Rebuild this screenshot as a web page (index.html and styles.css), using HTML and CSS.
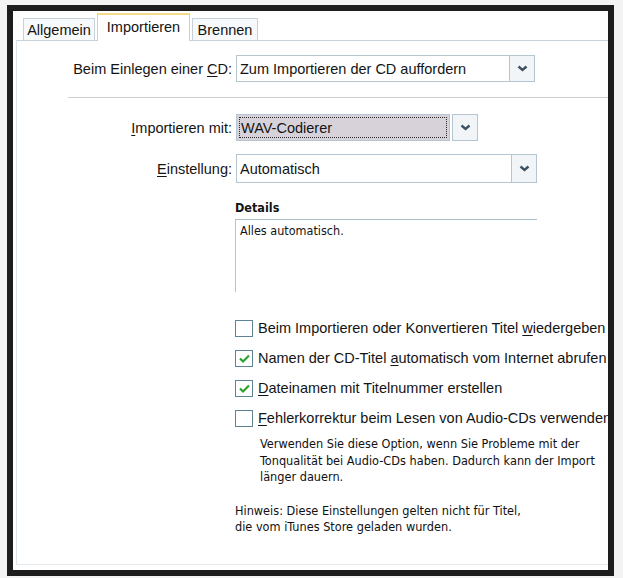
FILE: index.html
```html
<!DOCTYPE html>
<html lang="de">
<head>
  <meta charset="UTF-8">
  <title>Importieren</title>
  <link rel="stylesheet" href="styles.css">
</head>
<body>
  <div class="frame">
    <div class="tabs">
      <div class="tab t1">Allgemein</div>
      <div class="tab t2 active">Importieren</div>
      <div class="tab t3">Brennen</div>
    </div>
    <div class="panel">
      <div class="row r1">
        <span class="lbl">Beim Einlegen einer <u>C</u>D:</span>
        <div class="combo w1">
          <span class="field">Zum Importieren der CD auffordern</span>
          <span class="btn"><svg width="11" height="7" viewBox="0 0 11 7"><polyline points="1.5,1.5 5.5,5 9.5,1.5" fill="none" stroke="#3c5264" stroke-width="2.4"/></svg></span>
        </div>
      </div>
      <div class="sep"></div>
      <div class="row r2">
        <span class="lbl"><u>I</u>mportieren mit:</span>
        <div class="combo w2">
          <span class="field focus"><span class="dots">WAV-Codierer</span></span>
          <span class="btn gap"><svg width="11" height="7" viewBox="0 0 11 7"><polyline points="1.5,1.5 5.5,5 9.5,1.5" fill="none" stroke="#3c5264" stroke-width="2.4"/></svg></span>
        </div>
      </div>
      <div class="row r3">
        <span class="lbl"><u>E</u>instellung:</span>
        <div class="combo w3">
          <span class="field">Automatisch</span>
          <span class="btn"><svg width="11" height="7" viewBox="0 0 11 7"><polyline points="1.5,1.5 5.5,5 9.5,1.5" fill="none" stroke="#3c5264" stroke-width="2.4"/></svg></span>
        </div>
      </div>

      <div class="details">
        <div class="dhead">Details</div>
        <div class="dbox">Alles automatisch.</div>
      </div>

      <div class="checks">
        <div class="chk">
          <span class="box"></span>
          <span>Beim Importieren oder Konvertieren Titel <u>w</u>iedergeben</span>
        </div>
        <div class="chk">
          <span class="box"><svg width="13" height="11" viewBox="0 0 13 11"><polyline points="2,5.5 5,8.5 11,2.5" fill="none" stroke="#2ba22b" stroke-width="2.2"/></svg></span>
          <span>Namen der CD-Titel <u>a</u>utomatisch vom Internet abrufen</span>
        </div>
        <div class="chk">
          <span class="box"><svg width="13" height="11" viewBox="0 0 13 11"><polyline points="2,5.5 5,8.5 11,2.5" fill="none" stroke="#2ba22b" stroke-width="2.2"/></svg></span>
          <span><u>D</u>ateinamen mit Titelnummer erstellen</span>
        </div>
        <div class="chk last">
          <span class="box"></span>
          <span><u>F</u>ehlerkorrektur beim Lesen von Audio-CDs verwenden</span>
        </div>
      </div>

      <p class="note desc">Verwenden Sie diese Option, wenn Sie Probleme mit der<br>Tonqualität bei Audio-CDs haben. Dadurch kann der Import<br>länger dauern.</p>
      <p class="note hint">Hinweis: Diese Einstellungen gelten nicht für Titel,<br>die vom iTunes Store geladen wurden.</p>
    </div>
  </div>
</body>
</html>
```

FILE: styles.css
```css
body{ margin: 0; padding: 5px 0 0 7px; background: #f3f3f3; font-family: "Liberation Sans", Arial, sans-serif; font-size: 14.5px; color: #141414;}
u{ text-decoration-thickness: 1px; text-underline-offset: 2px;}

.frame{ width: 595px; height: 559px; border: 6px solid #1d1d1d; background: #fff; overflow: hidden;}

/* tab strip */
.tabs{ display: flex; align-items: flex-end; height: 29px; margin-left: 10px; gap: 2px;}
.tab{ height: 21px; line-height: 22px; text-align: center; border: 1px solid #c5d2db; border-bottom: none; background: #f7f9fa;}
.t1{ width: 70px;}
.t2{ width: 91px;}
.t3{ width: 64px;}
.tab.active{ height: 26px; line-height: 24px; background: #fff; border-top: 2px solid #f4dc8a; position: relative; top: 1px;}

.panel{ margin-left: 3px; width: 600px; height: 523px; border-top: 1px solid #c5d2db; border-left: 1px solid #dde4e9; border-bottom: 1px solid #e4e9ec; overflow: hidden;}

/* label + combo rows */
.row{ display: flex; align-items: center; gap: 4px;}
.r1{ margin-top: 14px;}
.r2{ margin-top: 14px;}
.r3{ margin-top: 13px;}
.lbl{ width: 215px; text-align: right; white-space: nowrap;}
.combo{ display: flex; height: 27px;}
.r3 .combo{ height: 29px;}
.w1{ width: 299px;}
.w2{ width: 242px;}
.w3{ width: 301px;}
.field{ flex: 1; border: 1px solid #b6c6d1; border-right: none; padding-left: 3px; display: flex; align-items: center; white-space: nowrap;}
.field.focus{ background: #d7d2da; padding: 2px; border-right: 1px solid #b6c6d1;}
.dots{ flex: 1; align-self: stretch; display: flex; align-items: center; border: 1px dotted #2a2a2a; padding-left: 1px;}
.btn{ width: 24px; border: 1px solid #b6c6d1; background: #f2f5f7; display: flex; align-items: center; justify-content: center;}
.btn.gap{ margin-left: 2px;}

.sep{ margin: 15px 0 0 51px; height: 1px; border-top: 1px solid #c9cfd3; border-bottom: 1px solid #fff;}

/* details group */
.details{ margin: 17px 0 0 218px; width: 302px; font-family: "DejaVu Sans Condensed", "DejaVu Sans", sans-serif; font-size: 12.5px;}
.dhead{ font-weight: bold; line-height: 16px;}
.dbox{ margin-top: 3px; height: 69px; border-top: 1px solid #a9bfcc; border-left: 1px solid #b3c6d1; padding: 3px 0 0 4px; line-height: 16px;}

/* check boxes */
.checks{ margin: 27px 0 0 218px; white-space: nowrap;}
.chk{ display: flex; align-items: center; gap: 5px; height: 18px; margin-bottom: 12px;}
.chk.last{ margin-top: 3px; margin-bottom: 0;}
.box{ width: 16px; height: 15px; border: 1px solid #5f8498; background: #fff; display: flex; align-items: center; justify-content: center; flex: none;}

.note{ margin: 0; font-family: "DejaVu Sans Condensed", "DejaVu Sans", sans-serif; font-size: 12.6px; line-height: 16.5px; color: #111;}
.desc{ margin: 9px 0 0 243px;}
.hint{ margin: 17px 0 0 218px;}
```
